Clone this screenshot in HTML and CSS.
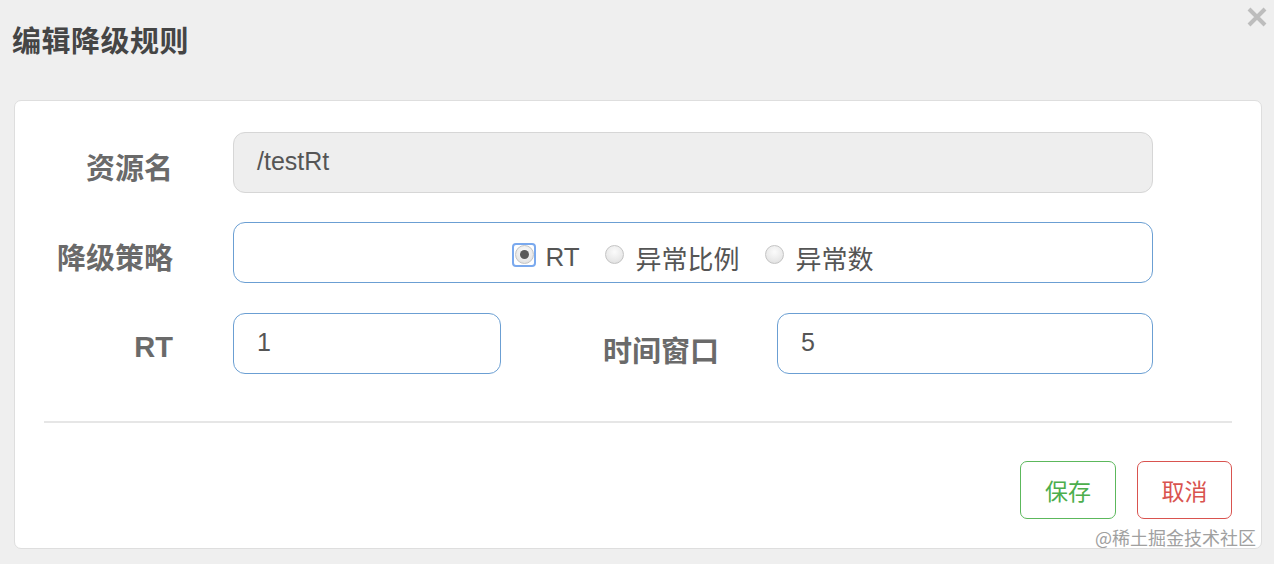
FILE: index.html
```html
<!DOCTYPE html>
<html lang="zh-CN">
<head>
<meta charset="utf-8">
<title>编辑降级规则</title>
<link rel="stylesheet" href="styles.css">
</head>
<body>
<div class="modal">
  <div class="modal-header">
    <h3 class="modal-title">编辑降级规则</h3>
    <button class="close" type="button" aria-label="close">
      <svg width="22" height="22" viewBox="0 0 22 22"><path d="M3 3 L19 19 M19 3 L3 19" stroke="#bdbdbd" stroke-width="4" stroke-linecap="butt" fill="none"/></svg>
    </button>
  </div>
  <div class="card">
    <div class="row">
      <label class="label">资源名</label>
      <div class="input input-wide disabled">/testRt</div>
    </div>
    <div class="row">
      <label class="label">降级策略</label>
      <div class="input input-wide focus radios">
        <label class="radio"><span class="ring"><span class="dot checked"></span></span>RT</label>
        <label class="radio"><span class="ring plain"><span class="dot"></span></span>异常比例</label>
        <label class="radio"><span class="ring plain"><span class="dot"></span></span>异常数</label>
      </div>
    </div>
    <div class="row">
      <label class="label">RT</label>
      <div class="input input-short focus">1</div>
      <label class="label label-mid">时间窗口</label>
      <div class="input input-mid focus">5</div>
    </div>
    <hr class="divider">
    <div class="actions">
      <button class="btn btn-save" type="button">保存</button>
      <button class="btn btn-cancel" type="button">取消</button>
    </div>
  </div>
  <div class="watermark">@稀土掘金技术社区</div>
</div>
</body>
</html>
```

FILE: styles.css
```css
* { box-sizing: border-box; }
html, body {
  margin: 0;
  padding: 0;
  background: #efefef;
  font-family: "Liberation Sans", Arial, "Noto Sans CJK SC", sans-serif;
}
.modal {
  position: relative;
  width: 1274px;
  height: 564px;
  padding: 0 12px 0 14px;
}
.modal-header {
  height: 100px;
  display: flex;
  justify-content: space-between;
  align-items: flex-start;
}
.modal-title {
  margin: 23px 0 0 -2px;
  font-size: 29px;
  font-weight: bold;
  color: #454545;
  line-height: 38px;
  letter-spacing: 0.5px;
}
.close {
  margin: 6px -6px 0 0;
  padding: 0;
  border: 0;
  background: none;
  width: 22px;
  height: 22px;
}
.card {
  width: 1248px;
  height: 449px;
  background: #fff;
  border: 1px solid #dedede;
  border-radius: 7px;
  padding: 31px 29px 29px 29px;
  display: flex;
  flex-direction: column;
}
.row {
  display: flex;
  align-items: center;
  height: 61px;
  margin-bottom: 29px;
}
.row:nth-child(2) { margin-bottom: 30px; }
.label {
  width: 129px;
  margin-right: 60px;
  text-align: right;
  font-size: 29px;
  font-weight: bold;
  color: #6a6a6a;
  padding-top: 7px;
  white-space: nowrap;
}
.label-mid {
  width: 218px;
  margin-right: 58px;
  padding-top: 10px;
}
.input {
  height: 61px;
  border: 1px solid #ccc;
  border-radius: 12px;
  font-size: 25px;
  color: #555;
  padding: 0 23px;
  display: flex;
  align-items: center;
  padding-bottom: 2px;
}
.input-wide { width: 920px; }
.input-short { width: 268px; }
.input-mid { width: 376px; }
.disabled {
  background: #eeeeee;
  border-color: #d6d6d6;
}
.focus {
  border-color: #6b9fd3;
  background: #fff;
}
.radios {
  justify-content: center;
  padding-top: 11px;
  gap: 23px;
}
.radio {
  display: flex;
  align-items: center;
  gap: 9px;
  font-size: 26px;
  color: #555;
}
.ring {
  width: 24px;
  height: 24px;
  border: 2px solid #7aa9ee;
  border-radius: 4px;
  display: flex;
  align-items: center;
  justify-content: center;
  margin-top: -5px;
}
.ring.plain { border-color: transparent; }
.dot {
  width: 19px;
  height: 19px;
  border-radius: 50%;
  border: 1px solid #c4c4c4;
  background: radial-gradient(circle at 50% 35%, #fbfbfb 0%, #e8e8e8 65%, #d6d6d6 100%);
  position: relative;
  flex: none;
}
.dot.checked::after {
  content: "";
  position: absolute;
  left: 4px;
  top: 4px;
  width: 9px;
  height: 9px;
  border-radius: 50%;
  background: #5a5a5a;
}
.divider {
  border: 0;
  border-top: 2px solid #e6e6e6;
  margin: 18px 0 0 0;
  width: 1188px;
}
.actions {
  display: flex;
  justify-content: flex-end;
  gap: 21px;
  margin-top: 38px;
}
.btn {
  height: 58px;
  background: #fff;
  border-radius: 7px;
  font-size: 23px;
  font-family: "Noto Sans CJK SC", sans-serif;
  padding: 0;
}
.btn-save {
  width: 96px;
  border: 1px solid #5cb85c;
  color: #4cae4c;
}
.btn-cancel {
  width: 95px;
  border: 1px solid #d9534f;
  color: #d9534f;
}
.watermark {
  position: absolute;
  left: 1095px;
  top: 524px;
  font-size: 18px;
  color: #a0a0a0;
  font-family: "Noto Sans CJK SC", sans-serif;
  white-space: nowrap;
}
```
